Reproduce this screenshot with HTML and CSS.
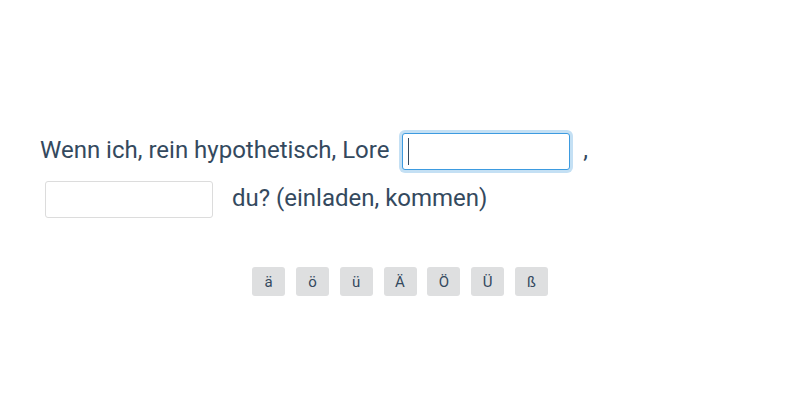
FILE: index.html
```html
<!DOCTYPE html>
<html lang="de">
<head>
<meta charset="utf-8">
<title>Lückentext</title>
<link rel="stylesheet" href="styles.css">
</head>
<body>
<main class="exercise">
  <p class="sentence">Wenn ich, rein hypothetisch, Lore <span class="field focused"><input class="gap" type="text" aria-label="Lücke 1"><span class="caret"></span></span> , <span class="field second"><input class="gap" type="text" aria-label="Lücke 2"></span> <span class="tail">du? (einladen, kommen)</span></p>
  <div class="keys">
    <button class="key">ä</button>
    <button class="key">ö</button>
    <button class="key">ü</button>
    <button class="key">Ä</button>
    <button class="key">Ö</button>
    <button class="key">Ü</button>
    <button class="key">ß</button>
  </div>
</main>
</body>
</html>
```
FILE: styles.css
```css
html, body {
  margin: 0;
  padding: 0;
  background: #ffffff;
}
body {
  font-family: Roboto, "Liberation Sans", sans-serif;
  color: #34495e;
}
.exercise {
  padding: 127px 40px 0 40px;
}
.sentence {
  margin: 0;
  font-size: 24px;
  line-height: 47px;
  width: 600px;
}
.field {
  position: relative;
  display: inline-block;
  vertical-align: middle;
  margin: 5px 7px;
  height: 37px;
  line-height: 0;
}
.field.second {
  margin-left: 5px;
}
.gap {
  box-sizing: border-box;
  width: 168px;
  height: 37px;
  margin: 0;
  padding: 0 6px;
  border: 1px solid #dcdcdc;
  border-radius: 3px;
  background: #fff;
  outline: none;
  font: inherit;
  color: #34495e;
}
.focused .gap {
  border-color: #3d9be0;
  box-shadow: 0 0 0 3px #c4e0f4;
}
.caret {
  position: absolute;
  left: 6px;
  top: 5px;
  width: 1px;
  height: 27px;
  background: #34495e;
}
.tail {
  margin-left: 6px;
}
.keys {
  display: flex;
  justify-content: center;
  gap: 10.8px;
  margin-top: 44px;
}
.key {
  box-sizing: border-box;
  width: 33px;
  height: 29px;
  padding: 0;
  border: none;
  border-radius: 3px;
  background: #dedfe0;
  color: #34495e;
  font-family: Roboto, "Liberation Sans", sans-serif;
  font-size: 15px;
}
```
